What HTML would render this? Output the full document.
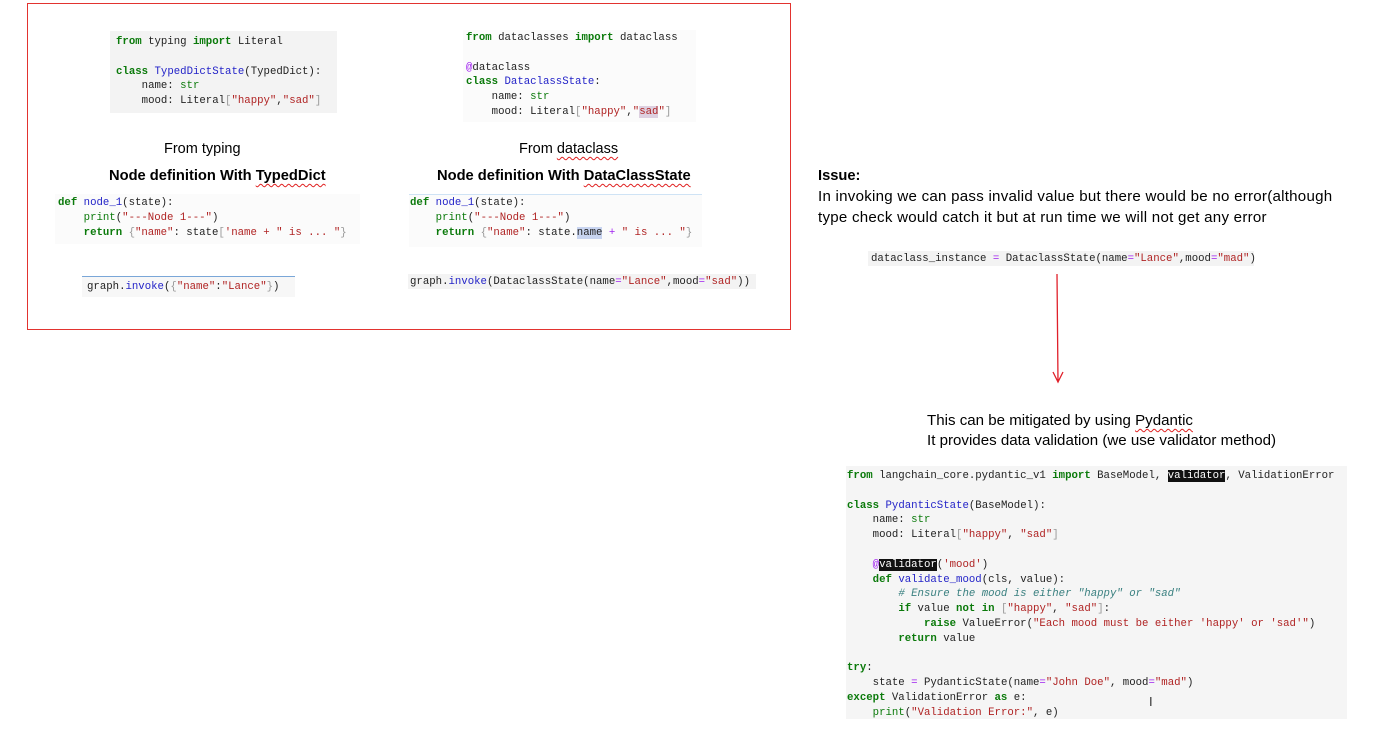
<!DOCTYPE html>
<html><head><meta charset="utf-8">
<style>
body{margin:0;width:1382px;height:745px;background:#fff;position:relative;overflow:hidden;font-family:"Liberation Sans",sans-serif;}
.a{position:absolute;}
pre{margin:0;font-family:"Liberation Mono",monospace;font-size:10.7px;line-height:14.8px;color:#222;}
.k{color:#0b7a0b;font-weight:bold}
.n{color:#2323c8}
.s{color:#b02323}
.b{color:#0b7a0b}
.o{color:#a020f0}
.c{color:#3a8080;font-style:italic}
.g{color:#999}
.hl{background:#111;color:#fff}
.t{font-size:14.5px;color:#000;white-space:nowrap}
.r{font-size:15.1px}
.h{font-weight:bold;font-size:14.7px;color:#000;white-space:nowrap}
.sq{text-decoration:underline wavy #e02020;text-decoration-thickness:1px;text-underline-offset:3px}
.box{background:#f6f6f6}
</style></head><body>
<div class="a" style="left:27px;top:3px;width:762px;height:325px;border:1.5px solid #e2332f;"></div>

<div class="a box" style="left:110px;top:31px;width:227px;height:82px;background:#f3f3f3"></div>
<pre class="a" style="left:116px;top:35px"><span class="k">from</span> typing <span class="k">import</span> Literal

<span class="k">class</span> <span class="n">TypedDictState</span>(TypedDict):
    name: <span class="b">str</span>
    mood: Literal<span class="g">[</span><span class="s">"happy"</span>,<span class="s">"sad"</span><span class="g">]</span></pre>

<div class="a t" style="left:164px;top:141px">From typing</div>
<div class="a h" style="left:109px;top:168px">Node definition With <span class="sq">TypedDict</span></div>

<div class="a" style="left:55px;top:194px;width:305px;height:50px;background:#fbfbfb"></div>
<pre class="a" style="left:58px;top:196px"><span class="k">def</span> <span class="n">node_1</span>(state):
    <span class="b">print</span>(<span class="s">"---Node 1---"</span>)
    <span class="k">return</span> <span class="g">{</span><span class="s">"name"</span>: state<span class="g">[</span><span class="s">'name + " is ... "</span><span class="g">}</span></pre>

<div class="a" style="left:82px;top:276px;width:213px;height:20px;background:#f7f7f7;border-top:1px solid #7aa7d8"></div>
<pre class="a" style="left:87px;top:280px">graph.<span class="n">invoke</span>(<span class="g">{</span><span class="s">"name"</span>:<span class="s">"Lance"</span><span class="g">}</span>)</pre>

<div class="a" style="left:463px;top:30px;width:233px;height:92px;background:#fbfbfb"></div>
<pre class="a" style="left:466px;top:31px"><span class="k">from</span> dataclasses <span class="k">import</span> dataclass

<span class="o">@</span>dataclass
<span class="k">class</span> <span class="n">DataclassState</span>:
    name: <span class="b">str</span>
    mood: Literal<span class="g">[</span><span class="s">"happy"</span>,<span class="s">"<span style="background:#ddd0e0">sad</span>"</span><span class="g">]</span></pre>

<div class="a t" style="left:519px;top:141px">From <span class="sq">dataclass</span></div>
<div class="a h" style="left:437px;top:168px">Node definition With <span class="sq">DataClassState</span></div>

<div class="a" style="left:409px;top:194px;width:293px;height:52px;background:#fbfbfb;border-top:1px solid #cfe3f5"></div>
<pre class="a" style="left:410px;top:196px"><span class="k">def</span> <span class="n">node_1</span>(state):
    <span class="b">print</span>(<span class="s">"---Node 1---"</span>)
    <span class="k">return</span> <span class="g">{</span><span class="s">"name"</span>: state.<span style="background:#c8d4f0">name</span> <span class="o">+</span> <span class="s">" is ... "</span><span class="g">}</span></pre>

<div class="a" style="left:408px;top:274px;width:348px;height:15px;background:#f3f3f3"></div>
<pre class="a" style="left:410px;top:275px">graph.<span class="n">invoke</span>(DataclassState(name<span class="o">=</span><span class="s">"Lance"</span>,mood<span class="o">=</span><span class="s">"sad"</span>))</pre>

<div class="a h" style="left:818px;top:168px">Issue:</div>
<div class="a t r" style="left:818px;top:188px;letter-spacing:0.25px">In invoking we can pass invalid value but there would be no error(although</div>
<div class="a t r" style="left:818px;top:209px;letter-spacing:0.25px">type check would catch it but at run time we will not get any error</div>

<div class="a" style="left:868px;top:251px;width:386px;height:15px;background:#f3f3f3"></div>
<pre class="a" style="left:871px;top:252px">dataclass_instance <span class="o">=</span> DataclassState(name<span class="o">=</span><span class="s">"Lance"</span>,mood<span class="o">=</span><span class="s">"mad"</span>)</pre>

<svg class="a" style="left:1050px;top:270px" width="20" height="120"><path d="M7 4 L8 112 M3 102 L8 112 L13 102" stroke="#e0202a" stroke-width="1.3" fill="none"/></svg>

<div class="a t r" style="left:927px;top:412px">This can be mitigated by using <span class="sq">Pydantic</span></div>
<div class="a t r" style="left:927px;top:432px">It provides data validation (we use validator method)</div>

<div class="a" style="left:846px;top:466px;width:501px;height:253px;background:#f5f5f5"></div>
<pre class="a" style="left:847px;top:469px"><span class="k">from</span> langchain_core.pydantic_v1 <span class="k">import</span> BaseModel, <span class="hl">validator</span>, ValidationError

<span class="k">class</span> <span class="n">PydanticState</span>(BaseModel):
    name: <span class="b">str</span>
    mood: Literal<span class="g">[</span><span class="s">"happy"</span>, <span class="s">"sad"</span><span class="g">]</span>

    <span class="o">@</span><span class="hl">validator</span>(<span class="s">'mood'</span>)
    <span class="k">def</span> <span class="n">validate_mood</span>(cls, value):
        <span class="c"># Ensure the mood is either "happy" or "sad"</span>
        <span class="k">if</span> value <span class="k">not</span> <span class="k">in</span> <span class="g">[</span><span class="s">"happy"</span>, <span class="s">"sad"</span><span class="g">]</span>:
            <span class="k">raise</span> ValueError(<span class="s">"Each mood must be either 'happy' or 'sad'"</span>)
        <span class="k">return</span> value

<span class="k">try</span>:
    state <span class="o">=</span> PydanticState(name<span class="o">=</span><span class="s">"John Doe"</span>, mood<span class="o">=</span><span class="s">"mad"</span>)
<span class="k">except</span> ValidationError <span class="k">as</span> e:
    <span class="b">print</span>(<span class="s">"Validation Error:"</span>, e)</pre>
<div class="a" style="left:1149px;top:694px;font-size:13px;color:#333">I</div>
</body></html>
